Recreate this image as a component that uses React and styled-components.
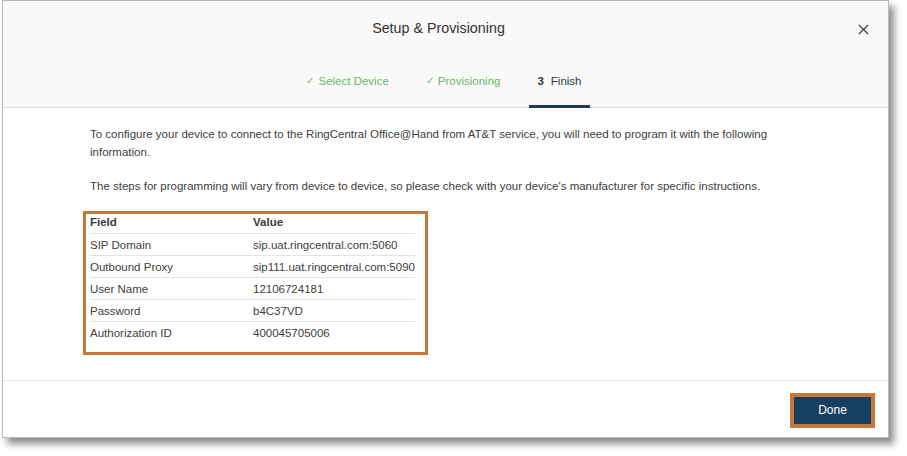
import React from "react";
import styled, { createGlobalStyle } from "styled-components";

const Global = createGlobalStyle`
  html, body { margin: 0; padding: 0; background: #ffffff; }
  body { font-family: "Liberation Sans", Arial, Helvetica, sans-serif; }
  * { box-sizing: border-box; }
`;

const Page = styled.div`
  width: 907px;
  height: 456px;
  padding: 0 0 0 2px;
  background: #fff;
`;

const Dialog = styled.div`
  width: 887px;
  height: 438px;
  border: 1px solid #b9b9b9;
  background: #fff;
  box-shadow: 5px 6px 7px rgba(0, 0, 0, 0.45);
  display: flex;
  flex-direction: column;
`;

const Header = styled.div`
  position: relative;
  height: 107px;
  background: #f9f9f9;
  border-bottom: 1px solid #e0e0e0;
  display: flex;
  flex-direction: column;
  align-items: center;
`;

const Title = styled.div`
  height: 53px;
  display: flex;
  align-items: center;
  justify-content: center;
  font-size: 14.3px;
  color: #333;
  padding-bottom: 0;
  margin-right: 14px;
`;

const Close = styled.button`
  position: absolute;
  right: 18px;
  top: 21px;
  width: 14px;
  height: 14px;
  padding: 0;
  border: none;
  background: transparent;
  display: flex;
  align-items: center;
  justify-content: center;
`;

const Tabs = styled.div`
  flex: 1;
  display: flex;
  gap: 21px;
  margin-left: -3px;
`;

const Tab = styled.div`
  display: flex;
  align-items: center;
  padding: 2px 8px 0;
  font-size: 11.5px;
  color: ${(p) => (p.$done ? "#6db56d" : "#2a3a4b")};
  border-bottom: 3px solid ${(p) => (p.$active ? "#1f3a53" : "transparent")};
  margin-bottom: -1px;
  gap: 4px;
`;

const Num = styled.span`
  font-weight: bold;
  margin-right: 3px;
`;

const Check = styled.span`
  font-size: 10px;
`;

const Body = styled.div`
  flex: 1;
  padding: 17px 80px 0 87px;
  border-bottom: 1px solid #e6e6e6;
  font-size: 11.5px;
  line-height: 18px;
  color: #404040;
`;

const Para = styled.p`
  margin: 0 0 16px;
`;

const Highlight = styled.div`
  display: inline-block;
  margin-left: -7px;
  border: 3px solid #c8773a;
  padding: 0 10px 8px 4px;
`;

const Table = styled.table`
  border-collapse: collapse;
  table-layout: fixed;
  width: 325px;
  font-size: 11.5px;
  color: #404040;
`;

const Th = styled.th`
  text-align: left;
  font-weight: bold;
  height: 19px;
  line-height: 16px;
  padding: 0 0 3px;
  color: #3a3a3a;
  width: ${(p) => p.$w || "auto"};
`;

const Td = styled.td`
  height: 22px;
  padding: 0;
  border-top: 1px solid #e4e4e4;
  white-space: nowrap;
`;

const Footer = styled.div`
  height: 56px;
  display: flex;
  align-items: center;
  justify-content: flex-end;
  padding-right: 13px;
`;

const DoneFrame = styled.div`
  border: 4px solid #c8773a;
  margin-top: 2px;
`;

const DoneButton = styled.button`
  width: 77px;
  height: 27px;
  border: none;
  background: #173f62;
  color: #fff;
  font-family: "Liberation Sans", Arial, sans-serif;
  font-size: 12px;
  display: block;
`;

const rows = [
  ["SIP Domain", "sip.uat.ringcentral.com:5060"],
  ["Outbound Proxy", "sip111.uat.ringcentral.com:5090"],
  ["User Name", "12106724181"],
  ["Password", "b4C37VD"],
  ["Authorization ID", "400045705006"],
];

export default function App() {
  return (
    <Page>
      <Global />
      <Dialog>
        <Header>
          <Title>Setup &amp; Provisioning</Title>
          <Close aria-label="Close">
            <svg width="11" height="11" viewBox="0 0 11 11">
              <path d="M1 1 L10 10 M10 1 L1 10" stroke="#444" strokeWidth="1.4" fill="none" />
            </svg>
          </Close>
          <Tabs>
            <Tab $done>
              <Check>✓</Check>Select Device
            </Tab>
            <Tab $done>
              <Check>✓</Check>Provisioning
            </Tab>
            <Tab $active>
              <Num>3</Num>Finish
            </Tab>
          </Tabs>
        </Header>
        <Body>
          <Para>
            To configure your device to connect to the RingCentral Office@Hand from AT&amp;T service, you will need to program it with the following information.
          </Para>
          <Para>
            The steps for programming will vary from device to device, so please check with your device's manufacturer for specific instructions.
          </Para>
          <Highlight>
            <Table>
              <thead>
                <tr>
                  <Th $w="163px">Field</Th>
                  <Th>Value</Th>
                </tr>
              </thead>
              <tbody>
                {rows.map(([f, v]) => (
                  <tr key={f}>
                    <Td>{f}</Td>
                    <Td>{v}</Td>
                  </tr>
                ))}
              </tbody>
            </Table>
          </Highlight>
        </Body>
        <Footer>
          <DoneFrame>
            <DoneButton>Done</DoneButton>
          </DoneFrame>
        </Footer>
      </Dialog>
    </Page>
  );
}
